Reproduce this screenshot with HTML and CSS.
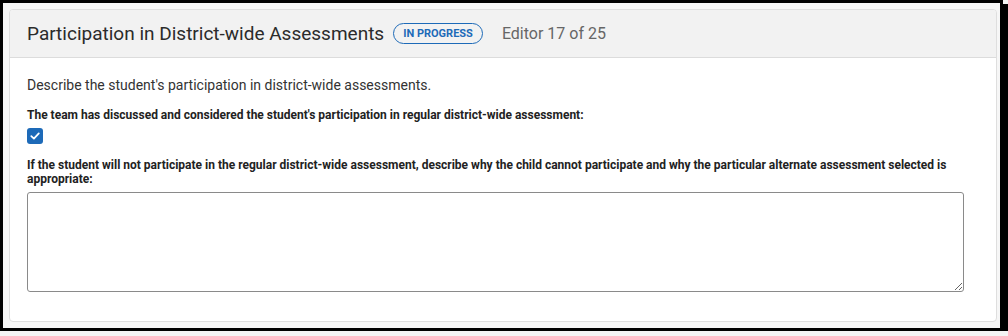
FILE: index.html
```html
<!DOCTYPE html>
<html lang="en">
<head>
  <meta charset="UTF-8" />
  <title>Participation in District-wide Assessments</title>
  <link rel="stylesheet" href="styles.css">
</head>
<body>

  <div class="frame">
    <div class="panel">
      <div class="panel-header">
        <h1>Participation in District-wide Assessments</h1>
        <span class="badge">IN PROGRESS</span>
        <span class="editor-count">Editor 17 of 25</span>
      </div>

      <div class="panel-body">
        <p class="intro">Describe the student's participation in district-wide assessments.</p>

        <div class="field">
          <label class="field-label">The team has discussed and considered the student's participation in regular district-wide assessment:</label>
          <span class="checkbox">
            <svg width="12" height="12" viewBox="0 0 12 12"><path d="M2.3 6.2 L4.9 8.6 L9.8 3.4" fill="none" stroke="#fff" stroke-width="1.8" stroke-linecap="round" stroke-linejoin="round"/></svg>
          </span>
        </div>

        <div class="field">
          <label class="field-label">If the student will not participate in the regular district-wide assessment, describe why the child cannot participate and why the particular alternate assessment selected is appropriate:</label>
          <textarea class="textbox"></textarea>
        </div>
      </div>
    </div>
  </div>

</body>
</html>
```

FILE: styles.css
```css
body {
  margin: 0;
  background: #f4f4f4;
  font-family: Roboto, 'Liberation Sans', sans-serif;
  color: #333;
}

.frame {
  width: 988px;
  height: 313px;
  border: 3px solid #000;
  box-shadow: 5px 4px 0 #000;
  background: #f6f6f6;
  padding: 6px 3px 6px 6px;
  box-sizing: content-box;
}

.panel {
  height: 313px;
  background: #fff;
  border: 1px solid #dedede;
  border-radius: 4px;
  box-sizing: border-box;
  overflow: hidden;
}

.panel-header {
  display: flex;
  align-items: center;
  height: 47px;
  padding: 0 17px;
  background: #f2f2f2;
  border-bottom: 1px solid #dcdcdc;
}

.panel-header h1 {
  margin: 0;
  font-size: 19px;
  font-weight: 400;
  color: #2b2b2b;
}

.badge {
  margin-left: 9px;
  padding: 3px 9px 2px;
  font-size: 11px;
  font-weight: 700;
  color: #1d6ab8;
  border: 1.5px solid #1d6ab8;
  border-radius: 12px;
  line-height: 14px;
}

.editor-count {
  margin-left: 19px;
  font-size: 16px;
  color: #666;
}

.panel-body {
  padding: 18px 17px 0 17px;
}

.intro {
  margin: 0 0 14px;
  font-size: 14px;
  line-height: 18px;
  color: #333;
}

.field {
  margin-bottom: 14px;
}

.field-label {
  display: block;
  font-size: 12px;
  font-weight: 700;
  line-height: 14px;
  color: #222;
  padding-right: 20px;
}

.checkbox {
  display: flex;
  align-items: center;
  justify-content: center;
  width: 16px;
  height: 16px;
  margin-top: 6px;
  background: #1d6ab8;
  border-radius: 3px;
}

.textbox {
  display: block;
  width: 937px;
  height: 100px;
  margin-top: 6px;
  border: 1px solid #8a8a8a;
  border-radius: 3px;
  box-sizing: border-box;
  resize: both;
  font-family: inherit;
}
```
